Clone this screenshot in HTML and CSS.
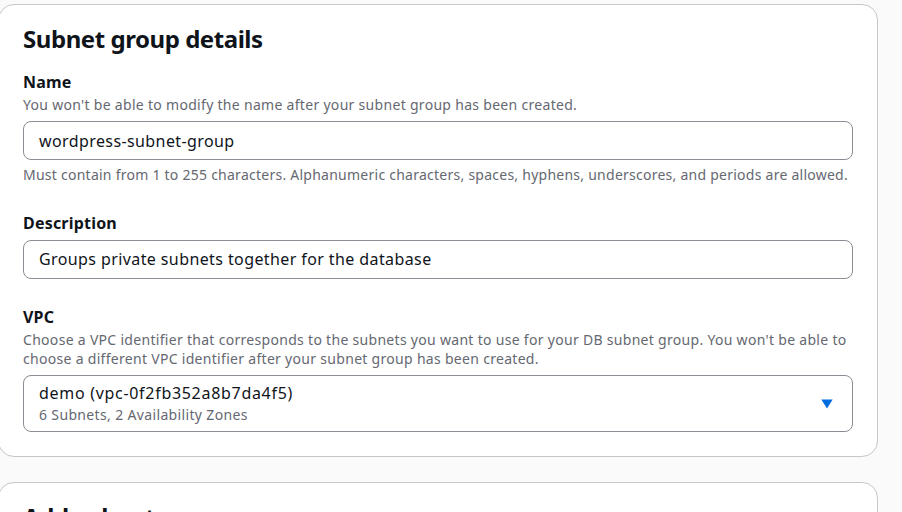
FILE: index.html
```html
<!DOCTYPE html>
<html lang="en">
<head>
<meta charset="utf-8">
<title>Subnet group details</title>
<link rel="stylesheet" href="styles.css">
</head>
<body>
<section class="card">
  <h2 class="card-title">Subnet group details</h2>
  <div class="fields">
    <div class="field">
      <div class="label">Name</div>
      <div class="desc">You won't be able to modify the name after your subnet group has been created.</div>
      <div class="input">wordpress-subnet-group</div>
      <div class="hint">Must contain from 1 to 255 characters. Alphanumeric characters, spaces, hyphens, underscores, and periods are allowed.</div>
    </div>
    <div class="field">
      <div class="label">Description</div>
      <div class="input input-nodesc">Groups private subnets together for the database</div>
    </div>
    <div class="field">
      <div class="label">VPC</div>
      <div class="desc">Choose a VPC identifier that corresponds to the subnets you want to use for your DB subnet group. You won't be able to choose a different VPC identifier after your subnet group has been created.</div>
      <div class="select">
        <div class="select-text">
          <div class="select-value">demo (vpc-0f2fb352a8b7da4f5)</div>
          <div class="select-sub">6 Subnets, 2 Availability Zones</div>
        </div>
        <svg class="caret" width="12" height="10" viewBox="0 0 12 10" aria-hidden="true"><path d="M0.3 0.6 L11.7 0.6 L6 9.6 Z" fill="#006ce0"/></svg>
      </div>
    </div>
  </div>
</section>
<section class="card card-next">
  <h2 class="card-title">Add subnets</h2>
</section>
</body>
</html>
```
FILE: styles.css
```css
html, body {
  margin: 0;
  padding: 0;
}
body {
  background: #fafafa;
  font-family: "Noto Sans", "Open Sans", "Liberation Sans", Arial, sans-serif;
  color: #0f141a;
  overflow: hidden;
  height: 512px;
}
.card {
  box-sizing: border-box;
  width: 880px;
  margin: 4px 0 0 -2px;
  background: #ffffff;
  border: 1px solid #c6c6cd;
  border-radius: 16px;
  padding: 18px 24px 24px;
}
.card-next {
  margin-top: 25px;
  height: 60px;
}
.card-title {
  margin: 0;
  font-size: 24px;
  line-height: 32px;
  font-weight: 700;
  letter-spacing: -0.45px;
  color: #0f141a;
}
.fields {
  display: flex;
  flex-direction: column;
  gap: 25px;
  margin-top: 14px;
}
.field {
  display: flex;
  flex-direction: column;
}
.label {
  font-size: 16px;
  line-height: 26px;
  font-weight: 700;
  letter-spacing: 0.2px;
}
.desc, .hint {
  font-size: 14px;
  line-height: 19.5px;
  color: #656871;
  letter-spacing: 0.3px;
}
.hint {
  margin-top: 5px;
  letter-spacing: 0.25px;
}
.input {
  margin-top: 6.5px;
  box-sizing: border-box;
  height: 39px;
  border: 1px solid #8c8c94;
  border-radius: 8px;
  padding: 0 15px;
  display: flex;
  align-items: center;
  font-size: 16px;
  line-height: 22px;
  letter-spacing: 0.4px;
}
.input-nodesc {
  margin-top: 4px;
}
.select {
  margin-top: 6.5px;
  box-sizing: border-box;
  height: 57px;
  border: 1px solid #8c8c94;
  border-radius: 8px;
  padding: 0 19px 0 15px;
  display: flex;
  align-items: center;
  justify-content: space-between;
}
.select-value {
  font-size: 16px;
  line-height: 22px;
  letter-spacing: 0.7px;
}
.select-sub {
  font-size: 14px;
  line-height: 22px;
  color: #656871;
  letter-spacing: 0.35px;
}
.caret {
  display: block;
}
```
